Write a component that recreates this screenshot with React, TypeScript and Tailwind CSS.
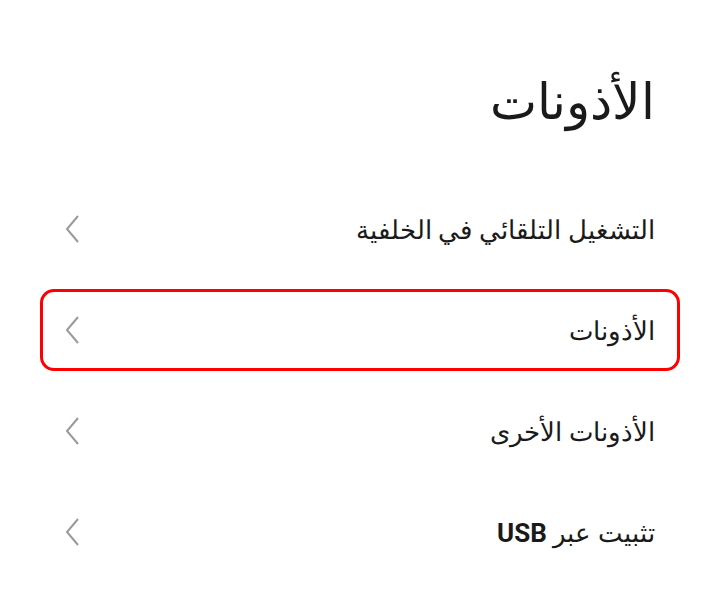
const ROWS = [
  { label: 'التشغيل التلقائي في الخلفية', active: false },
  { label: 'الأذونات', active: true },
  { label: 'الأذونات الأخرى', active: false },
  { label: 'تثبيت عبر', latin: 'USB', active: false },
];

function Chevron() {
  return (
    <svg width="18" height="28" viewBox="0 0 18 28" className="shrink-0">
      <path d="M15 1 L4 14 L15 27" fill="none" stroke="#9a9a9a" strokeWidth="2" />
    </svg>
  );
}

export default function App() {
  return (
    <div
      dir="rtl"
      className="h-[591px] w-[727px] bg-white text-[#1a1a1a]"
      style={{ fontFamily: '"Noto Sans", "DejaVu Sans", Roboto, sans-serif' }}
    >
      <h1 className="pr-[72px] pt-[70px] text-[50px] font-light leading-[60px]">الأذونات</h1>
      <div className="mt-[58px] flex flex-col gap-[19px] pl-[40px] pr-[47px]">
        {ROWS.map((r) => (
          <div
            key={r.label}
            className={
              'flex h-[82px] items-center justify-between rounded-[14px] pl-[20px] pr-[22px] ' +
              (r.active ? 'border-[3px] border-[#ff0000]' : 'border-[3px] border-transparent')
            }
          >
            <span className="text-[26px] font-light leading-none">
              {r.label}
              {r.latin && (
                <span className="font-bold" style={{ fontFamily: 'Roboto, sans-serif' }}>
                  {' '}
                  {r.latin}
                </span>
              )}
            </span>
            <Chevron />
          </div>
        ))}
      </div>
    </div>
  );
}
